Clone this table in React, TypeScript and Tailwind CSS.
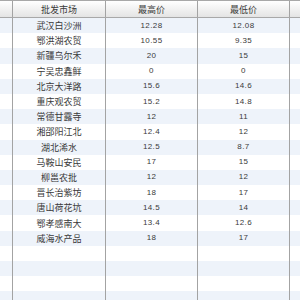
import React from 'react';

type Row = [string, string, string];

const rows: Row[] = [
  ['武汉白沙洲', '12.28', '12.08'],
  ['鄂洪湖农贸', '10.55', '9.35'],
  ['新疆乌尔禾', '20', '15'],
  ['宁吴忠鑫鲜', '0', '0'],
  ['北京大洋路', '15.6', '14.6'],
  ['重庆观农贸', '15.2', '14.8'],
  ['常德甘露寺', '12', '11'],
  ['湘邵阳江北', '12.4', '12'],
  ['湖北浠水', '12.5', '8.7'],
  ['马鞍山安民', '17', '15'],
  ['柳邕农批', '12', '12'],
  ['晋长治紫坊', '18', '17'],
  ['唐山荷花坑', '14.5', '14'],
  ['鄂孝感南大', '13.4', '12.6'],
  ['威海水产品', '18', '17'],
  ['', '', ''],
  ['', '', ''],
  ['', '', ''],
  ['', '', ''],
];

const grid = 'grid grid-cols-[13px_93px_92px_92px_1fr]';
const cell = 'flex items-center justify-center border-r border-[#a3a3a3]';
const num = "font-['Liberation_Sans',sans-serif] text-[8px] tracking-[0.4px]";

export default function App() {
  return (
    <div className="h-[300px] w-[300px] overflow-hidden bg-white text-[#3a3a3a] font-['Noto_Sans_CJK_SC',sans-serif]">
      {/* Header */}
      <div className={`${grid} h-[18px] border-y border-[#a8a8a8] bg-gradient-to-b from-white to-[#e4e4e4] text-[9px] leading-none`}>
        <div className={cell} />
        <div className={cell}>批发市场</div>
        <div className={cell}>最高价</div>
        <div className={cell}>最低价</div>
        <div />
      </div>

      {/* Body */}
      {rows.map((r, i) => (
        <div
          key={i}
          className={`${grid} h-[15.2px] text-[9px] leading-none ${i % 2 === 0 ? 'bg-[#eef3fa]' : 'bg-white'}`}
        >
          <div className={cell} />
          <div className={cell}>{r[0]}</div>
          <div className={`${cell} ${num}`}>{r[1]}</div>
          <div className={`${cell} ${num}`}>{r[2]}</div>
          <div />
        </div>
      ))}
    </div>
  );
}
